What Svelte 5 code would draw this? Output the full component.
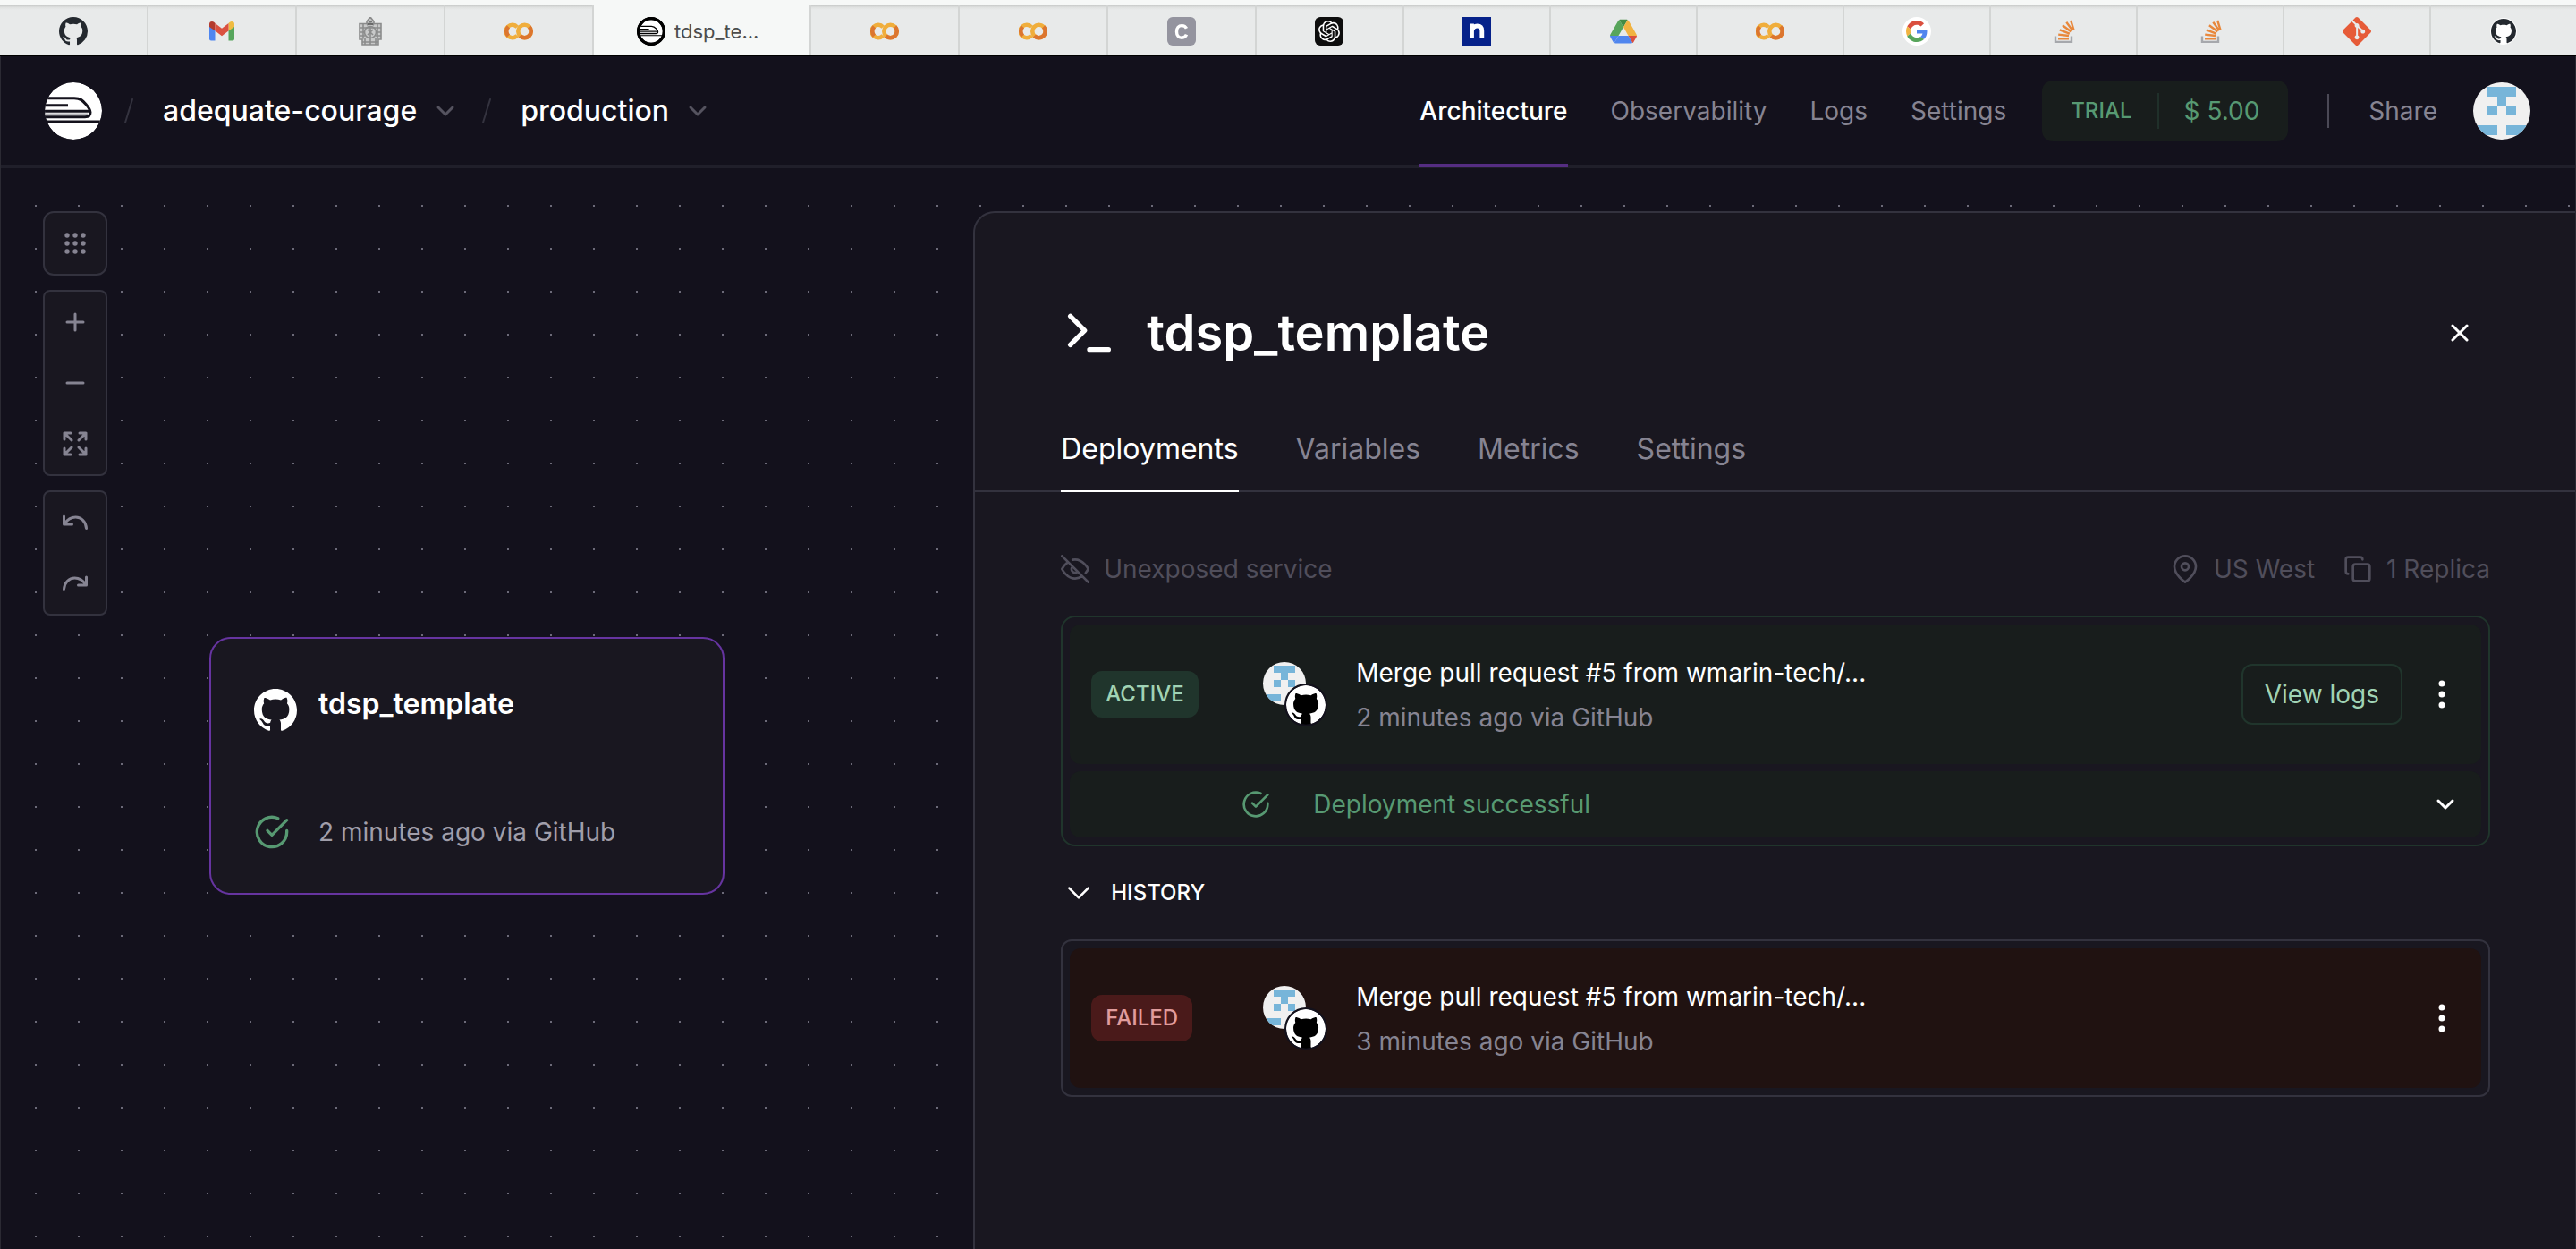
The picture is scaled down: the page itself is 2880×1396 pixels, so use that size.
<script lang="ts">
  type Deployment = { status: string; kind: string; title: string; time: string; logs: boolean };

  const tabsBefore = ['github', 'gmail', 'crest', 'colab'];
  const tabsAfter = [
    'colab', 'colab', 'letter', 'openai', 'notebook', 'drive',
    'colab', 'google', 'stack', 'stack', 'git', 'githubRound'
  ];
  const nav = ['Architecture', 'Observability', 'Logs', 'Settings'];
  const panelTabs = ['Deployments', 'Variables', 'Metrics', 'Settings'];

  const active: Deployment = {
    status: 'ACTIVE', kind: 'ok', title: 'Merge pull request #5 from wmarin-tech/...',
    time: '2 minutes ago via GitHub', logs: true
  };
  const failed: Deployment = {
    status: 'FAILED', kind: 'bad', title: 'Merge pull request #5 from wmarin-tech/...',
    time: '3 minutes ago via GitHub', logs: false
  };

  const octocat =
    'M8 0C3.58 0 0 3.58 0 8c0 3.54 2.29 6.53 5.47 7.59.4.07.55-.17.55-.38 0-.19-.01-.82-.01-1.49-2.01.37-2.53-.49-2.69-.94-.09-.23-.48-.94-.82-1.13-.28-.15-.68-.52-.01-.53.63-.01 1.08.58 1.23.82.72 1.21 1.87.87 2.33.66.07-.52.28-.87.51-1.07-1.78-.2-3.64-.89-3.64-3.95 0-.87.31-1.59.82-2.15-.08-.2-.36-1.02.08-2.12 0 0 .67-.21 2.2.82.64-.18 1.32-.27 2-.27s1.36.09 2 .27c1.53-1.04 2.2-.82 2.2-.82.44 1.1.16 1.92.08 2.12.51.56.82 1.27.82 2.15 0 3.07-1.87 3.75-3.65 3.95.29.25.54.73.54 1.48 0 1.07-.01 1.93-.01 2.2 0 .21.15.46.55.38A8.01 8.01 0 0 0 16 8c0-4.42-3.58-8-8-8z';
</script>

{#snippet favicon(name: string)}
  {#if name === 'github'}
    <svg class="favicon" viewBox="0 0 16 16"><path fill="#24292f" d={octocat} /></svg>
  {:else if name === 'githubRound'}
    <svg class="favicon" viewBox="0 0 32 32">
      <circle cx="16" cy="16" r="15" fill="#fff" />
      <g transform="translate(2 2) scale(1.75)"><path fill="#24292f" d={octocat} /></g>
    </svg>
  {:else if name === 'gmail'}
    <svg class="favicon" viewBox="0 0 32 32">
      <path fill="#4e86f0" d="M2 9v15.500q0 2 2 2h4.500V14z" />
      <path fill="#56a55c" d="M30 9v15.500q0 2-2 2h-4.500V14z" />
      <path fill="#b33b2e" d="M2 9.500V8q0-3 3-3 1.200 0 2.200.8L8.500 7v8.500L2 11z" />
      <path fill="#efbb41" d="M30 9.500V8q0-3-3-3-1.200 0-2.200.8L23.500 7v8.500L30 11z" />
      <path fill="#da5140" d="M8.500 7 16 12.800 23.500 7v8.500L16 21.200 8.500 15.500z" />
    </svg>
  {:else if name === 'crest'}
    <svg class="favicon" viewBox="0 0 32 32" fill="none" stroke="#8b8c8c" stroke-width="1.600">
      <path fill="#c3c4c4" d="M12 5 16 0l4 5v3h-8z" />
      <path fill="#c8c9c9" d="M4 7.500h24v17.500h-3v6H7v-6H4z" />
      <path d="M8 7.500v17M24 7.500v17M12 9l4-2 4 2M4 12h24M4 17h6M22 17h6M4 21h6M22 21h6" />
      <circle cx="16" cy="17" r="6.500" />
      <path d="M13 14l6 6M19 14l-6 6M16 11v13M10 24v7M16 24v7M22 24v7M7 28h18" />
      <path stroke="#5d5e5e" d="M14 5h4M13 8h6" />
    </svg>
  {:else if name === 'colab'}
    <svg class="favicon" viewBox="0 0 32 32" fill="none" stroke-width="4.600">
      <path stroke="#f0ae3c" d="M14.200 11.200A7.200 7.200 0 1 0 14.200 20.800" />
      <path stroke="#dc762f" d="M4.400 10.900A7.200 7.200 0 0 0 4.400 21.100" />
      <circle stroke="#f0ae3c" cx="22.500" cy="16" r="7.200" />
      <path stroke="#dc762f" d="M27.600 10.900A7.200 7.200 0 0 1 17.400 21.100" />
    </svg>
  {:else if name === 'letter'}
    <svg class="favicon" viewBox="0 0 32 32">
      <rect width="32" height="32" rx="6" fill="#94949f" />
      <path d="M21.500 12.800C20.500 10.500 18.600 9.600 16.200 9.600c-3.400 0-5.700 2.600-5.700 6.800s2.300 6.800 5.700 6.800c2.400 0 4.400-1 5.300-3.500" fill="none" stroke="#fff" stroke-width="3.400" />
    </svg>
  {:else if name === 'openai'}
    <svg class="favicon" viewBox="0 0 32 32">
      <rect width="32" height="32" rx="6" fill="#0d0d0d" />
      <path
        transform="translate(4 4)"
        fill="#fff"
        d="M22.2819 9.8211a5.9847 5.9847 0 0 0-.5157-4.9108 6.0462 6.0462 0 0 0-6.5098-2.9A6.0651 6.0651 0 0 0 4.9807 4.1818a5.9847 5.9847 0 0 0-3.9977 2.9 6.0462 6.0462 0 0 0 .7427 7.0966 5.98 5.98 0 0 0 .511 4.9107 6.051 6.051 0 0 0 6.5146 2.9001A5.9847 5.9847 0 0 0 13.2599 24a6.0557 6.0557 0 0 0 5.7718-4.2058 5.9894 5.9894 0 0 0 3.9977-2.9001 6.0557 6.0557 0 0 0-.7475-7.0729zm-9.022 12.6081a4.4755 4.4755 0 0 1-2.8764-1.0408l.1419-.0804 4.7783-2.7582a.7948.7948 0 0 0 .3927-.6813v-6.7369l2.02 1.1686a.071.071 0 0 1 .038.052v5.5826a4.504 4.504 0 0 1-4.4945 4.4944zm-9.6607-4.1254a4.4708 4.4708 0 0 1-.5346-3.0137l.142.0852 4.783 2.7582a.7712.7712 0 0 0 .7806 0l5.8428-3.3685v2.3324a.0804.0804 0 0 1-.0332.0615L9.74 19.9502a4.4992 4.4992 0 0 1-6.1408-1.6464zM2.3408 7.8956a4.485 4.485 0 0 1 2.3655-1.9728V11.6a.7664.7664 0 0 0 .3879.6765l5.8144 3.3543-2.0201 1.1685a.0757.0757 0 0 1-.071 0l-4.8303-2.7865A4.504 4.504 0 0 1 2.3408 7.872zm16.5963 3.8558L13.1038 8.364 15.1192 7.2a.0757.0757 0 0 1 .071 0l4.8303 2.7913a4.4944 4.4944 0 0 1-.6765 8.1042v-5.6772a.79.79 0 0 0-.407-.667zm2.0107-3.0231l-.142-.0852-4.7735-2.7818a.7759.7759 0 0 0-.7854 0L9.409 9.2297V6.8974a.0662.0662 0 0 1 .0284-.0615l4.8303-2.7866a4.4992 4.4992 0 0 1 6.6802 4.66zM8.3065 12.863l-2.02-1.1638a.0804.0804 0 0 1-.038-.0567V6.0742a4.4992 4.4992 0 0 1 7.3757-3.4537l-.142.0805L8.704 5.459a.7948.7948 0 0 0-.3927.6813zm1.0976-2.3654l2.602-1.4998 2.6069 1.4998v2.9994l-2.5974 1.4997-2.6067-1.4997Z"
      />
    </svg>
  {:else if name === 'notebook'}
    <svg class="favicon" viewBox="0 0 32 32">
      <rect width="32" height="32" fill="#06228a" />
      <path d="M8 10h2.500V24M10.500 15c1-3 3.500-5 6-5 3.600 0 5.300 2 5.300 5.500V24" fill="none" stroke="#fff" stroke-width="4.800" />
    </svg>
  {:else if name === 'drive'}
    <svg class="favicon" viewBox="-3 -8 93.300 93.300">
      <path fill="#4d83ee" d="m6.600 66.850 3.850 6.650c.8 1.400 1.950 2.500 3.300 3.300l13.750-23.800h-27.500c0 1.550.4 3.100 1.200 4.500z" />
      <path fill="#57a55b" d="m43.650 25-13.750-23.800c-1.350.8-2.500 1.900-3.300 3.300l-25.400 44a9.060 9.060 0 0 0 -1.200 4.500h27.500z" />
      <path fill="#da4f3e" d="m73.550 76.800c1.350-.8 2.500-1.900 3.300-3.300l1.600-2.750 7.650-13.250c.8-1.400 1.200-2.950 1.200-4.500h-27.502l5.852 11.500z" />
      <path fill="#438c45" d="m43.650 25 13.750-23.800c-1.350-.8-2.900-1.200-4.500-1.200h-18.500c-1.600 0-3.150.45-4.500 1.200z" />
      <path fill="#5086ee" d="m59.800 53h-32.300l-13.750 23.800c1.350.8 2.900 1.200 4.500 1.200h50.800c1.600 0 3.150-.45 4.500-1.200z" />
      <path fill="#f1b341" d="m73.400 26.500-12.700-22c-.8-1.400-1.950-2.500-3.300-3.300l-13.750 23.800 16.150 28h27.450c0-1.550-.4-3.100-1.200-4.500z" />
    </svg>
  {:else if name === 'google'}
    <svg class="favicon" viewBox="0 0 32 32">
      <circle cx="16" cy="16" r="16" fill="#fff" />
      <g transform="translate(4 4) scale(.5)">
        <path fill="#da4f3e" d="M24 9.500c3.540 0 6.710 1.220 9.210 3.600l6.850-6.850C35.900 2.380 30.470 0 24 0 14.620 0 6.510 5.380 2.560 13.220l7.980 6.190C12.430 13.720 17.740 9.500 24 9.500z" />
        <path fill="#5086ee" d="M46.980 24.550c0-1.570-.15-3.090-.38-4.550H24v9.020h12.940c-.58 2.960-2.260 5.480-4.780 7.180l7.730 6c4.510-4.180 7.090-10.360 7.090-17.650z" />
        <path fill="#f1b341" d="M10.530 28.590c-.48-1.450-.76-2.990-.76-4.590s.27-3.140.76-4.590l-7.980-6.190C.92 16.460 0 20.120 0 24c0 3.880.92 7.540 2.560 10.780l7.970-6.190z" />
        <path fill="#57a55b" d="M24 48c6.480 0 11.930-2.130 15.890-5.810l-7.730-6c-2.150 1.450-4.920 2.300-8.160 2.300-6.260 0-11.570-4.220-13.470-9.910l-7.980 6.190C6.510 42.620 14.620 48 24 48z" />
      </g>
    </svg>
  {:else if name === 'stack'}
    <svg class="favicon" viewBox="0 0 32 32" fill="none" stroke="#e8883c" stroke-width="2.400">
      <path stroke="#a6a8ac" d="M7 21.500v6.400h18v-6.400" />
      <path d="M10 24.200h12M10.200 19.600l11.800 1.400M11.800 14.400l11 4.200M14.900 9.300l9.500 7M19.300 5.800l6.900 9.300M24.200 3.800l3.300 10.700" />
    </svg>
  {:else if name === 'git'}
    <svg class="favicon" viewBox="0 0 24 24">
      <path
        fill="#e65b38"
        d="M23.546 10.930L13.067.452c-.604-.603-1.582-.603-2.188 0L8.708 2.627l2.760 2.760c.645-.215 1.379-.07 1.889.441.516.515.658 1.258.438 1.900l2.658 2.660c.645-.223 1.387-.078 1.900.435.721.72.721 1.884 0 2.604-.719.719-1.881.719-2.600 0-.539-.541-.674-1.337-.404-1.996L12.860 8.955v6.525c.176.086.342.203.488.348.713.721.713 1.883 0 2.600-.719.721-1.889.721-2.609 0-.719-.719-.719-1.879 0-2.598.182-.18.387-.316.605-.406V8.835c-.217-.091-.424-.222-.6-.401-.545-.545-.676-1.342-.396-2.009L7.636 3.700.450 10.881c-.6.605-.6 1.584 0 2.189l10.480 10.477c.604.604 1.582.604 2.186 0l10.430-10.430c.605-.603.605-1.582 0-2.187"
      />
    </svg>
  {/if}
{/snippet}

{#snippet train(line: string)}
  <circle cx="32" cy="32" r="32" fill="#fff" />
  <g fill="none" stroke={line} stroke-width="3">
    <path d="M3 17.700H33C40 17.700 42.500 20.500 46 24.500 49 28 51 30.500 51 33.500 51 37 48.500 38.700 45 38.700H0M0 25.800H26M0 32.300H50.500M2 43.900H62" />
  </g>
  <path d="M0 35.600H48" stroke="#b9b9bd" stroke-width="2" />
{/snippet}

{#snippet identicon()}
  <svg class="identicon" viewBox="0 0 12 12" shape-rendering="crispEdges" aria-hidden="true">
    <rect width="12" height="12" fill="#f0f0f0" />
    <path fill="#77b5d9" d="M3 1h6v2H3zM5 3h2v2H5zM3 5h2v2H3zM7 5h2v2H7zM1 9h4v2H1zM7 9h4v2H7z" />
  </svg>
{/snippet}

{#snippet chevron(cls: string)}
  <svg class={cls} viewBox="0 0 24 24" fill="none" stroke="currentColor" stroke-linecap="round" stroke-linejoin="round" aria-hidden="true">
    <path d="M4 8l8 8 8-8" />
  </svg>
{/snippet}

{#snippet checkCircle(cls: string)}
  <svg class={cls} viewBox="0 0 24 24" fill="none" stroke="currentColor" stroke-width="2" stroke-linecap="round" stroke-linejoin="round" aria-hidden="true">
    <path d="M22 11.080V12a10 10 0 1 1-5.930-9.140M22 4 12 14.010l-3-3" />
  </svg>
{/snippet}

{#snippet deploymentRow(d: Deployment)}
  <div class="row {d.kind}">
    <div class="status"><span class="badge">{d.status}</span></div>
    <div class="who">
      {@render identicon()}
      <svg class="source" viewBox="0 0 16 16" role="img" aria-label="GitHub">
        <circle cx="8" cy="8" r="7.900" fill="#000" />
        <path fill="#fff" d={octocat} />
      </svg>
    </div>
    <div class="commit">
      <p class="commit-title">{d.title}</p>
      <p class="commit-time">{d.time}</p>
    </div>
    {#if d.logs}<button class="logs">View logs</button>{/if}
    <button class="kebab" aria-label="Deployment menu">
      <svg viewBox="0 0 32 32" fill="currentColor"><circle cx="16" cy="4" r="3.500" /><circle cx="16" cy="16" r="3.500" /><circle cx="16" cy="28" r="3.500" /></svg>
    </button>
  </div>
{/snippet}

<div class="page">
  <div class="tabbar">
    {#each tabsBefore as name}
      <button class="tab" aria-label={name}>{@render favicon(name)}</button>
    {/each}
    <button class="tab current">
      <svg class="favicon" viewBox="0 0 80 80">
        <circle cx="40" cy="40" r="40" fill="#000" />
        <g transform="translate(8 8)">{@render train('#000')}</g>
        <circle cx="40" cy="40" r="36" fill="none" stroke="#000" stroke-width="8" />
      </svg>
      <span>tdsp_te...</span>
    </button>
    {#each tabsAfter as name}
      <button class="tab after" aria-label={name}>{@render favicon(name)}</button>
    {/each}
  </div>

  <div class="frame">
    <header>
      <a class="logo" href="#home" aria-label="Home">
        <svg viewBox="0 0 64 64">
          <clipPath id="disc"><circle cx="32" cy="32" r="32" /></clipPath>
          <g clip-path="url(#disc)">{@render train('#14121c')}</g>
        </svg>
      </a>
      <svg class="slash" viewBox="0 0 12 28" aria-hidden="true"><path d="M10 1 2 27" /></svg>
      <button class="crumb">adequate-courage {@render chevron('crumb-chevron')}</button>
      <svg class="slash" viewBox="0 0 12 28" aria-hidden="true"><path d="M10 1 2 27" /></svg>
      <button class="crumb">production {@render chevron('crumb-chevron')}</button>

      <nav>
        {#each nav as item, i}
          <a href="#{item.toLowerCase()}" class:selected={i === 0}>{item}</a>
        {/each}
      </nav>
      <div class="trial"><span class="plan">TRIAL</span><span class="credit">$ 5.00</span></div>
      <span class="separator"></span>
      <button class="share">Share</button>
      <button class="account" aria-label="Account">{@render identicon()}</button>
    </header>

    <main>
      <section class="workspace">
        <div class="tools">
          <div class="toolgroup single">
            <button aria-label="Grid">
              <svg viewBox="0 0 24 24" fill="currentColor">
                {#each [3, 12, 21] as y}{#each [3, 12, 21] as x}<circle cx={x} cy={y} r="2.700" />{/each}{/each}
              </svg>
            </button>
          </div>
          <div class="toolgroup">
            <button aria-label="Zoom in"><svg viewBox="0 0 24 24"><path d="M12 3v18M3 12h18" /></svg></button>
            <button aria-label="Zoom out"><svg viewBox="0 0 24 24"><path d="M3 12h18" /></svg></button>
            <button aria-label="Fit view">
              <svg class="wide" viewBox="0 0 28 28"><path d="M2 9V2H9M2 2 10 10M19 2h7V9M26 2 18 10M2 19v7H9M2 26 10 18M26 19v7H19M26 26 18 18" /></svg>
            </button>
          </div>
          <div class="toolgroup">
            <button aria-label="Undo"><svg class="wide" viewBox="0 0 28 28"><path d="M1.500 7v9H10.500M2 15.500C5 11 9 8 14.500 8 21 8 26 13 26.500 20.500" /></svg></button>
            <button aria-label="Redo"><svg class="wide" viewBox="0 0 28 28"><path d="M26.500 7v9H17.500M26 15.500C23 11 19 8 13.500 8 7 8 2 13 1.500 20.500" /></svg></button>
          </div>
        </div>

        <article class="node">
          <div class="node-head">
            <svg class="node-logo" viewBox="0 0 16 16" aria-hidden="true"><path fill="#fff" d={octocat} /></svg>
            <h2>tdsp_template</h2>
          </div>
          <div class="node-foot">{@render checkCircle('node-check')}<span>2 minutes ago via GitHub</span></div>
        </article>
      </section>

      <aside>
        <div class="panel-head">
          <svg class="terminal" viewBox="0 0 24 24" aria-hidden="true"><path d="M4 17l6-6-6-6M12 19h8" /></svg>
          <h1>tdsp_template</h1>
          <button class="close" aria-label="Close"><svg viewBox="0 0 20 20"><path d="M2 2l16 16M18 2 2 18" /></svg></button>
        </div>
        <div class="panel-tabs" role="tablist">
          {#each panelTabs as item, i}
            <button role="tab" aria-selected={i === 0} class:selected={i === 0}>{item}</button>
          {/each}
        </div>

        <div class="panel-body">
          <div class="meta">
            <svg viewBox="0 0 24 24" aria-hidden="true"><path d="M17.940 17.940A10.070 10.070 0 0 1 12 20c-7 0-11-8-11-8a18.450 18.450 0 0 1 5.060-5.940M9.900 4.240A9.120 9.120 0 0 1 12 4c7 0 11 8 11 8a18.500 18.500 0 0 1-2.160 3.190m-6.720-1.070a3 3 0 1 1-4.240-4.240M1 1l22 22" /></svg>
            <span>Unexposed service</span>
            <svg class="push" viewBox="0 0 24 24" aria-hidden="true"><path d="M21 10c0 7-9 13-9 13s-9-6-9-13a9 9 0 0 1 18 0z" /><circle cx="12" cy="10" r="3" /></svg>
            <span class="region">US West</span>
            <svg viewBox="0 0 24 24" aria-hidden="true"><rect x="8" y="8" width="14" height="14" rx="2" /><path d="M4 16c-1.100 0-2-.9-2-2V4c0-1.100.9-2 2-2h10c1.100 0 2 .9 2 2" /></svg>
            <span>1 Replica</span>
          </div>

          <div class="card ok">
            {@render deploymentRow(active)}
            <button class="outcome">
              {@render checkCircle('outcome-check')}
              <span>Deployment successful</span>
              {@render chevron('outcome-chevron')}
            </button>
          </div>

          <button class="history">{@render chevron('history-chevron')}HISTORY</button>

          <div class="card">{@render deploymentRow(failed)}</div>
        </div>
      </aside>
    </main>
  </div>
</div>

<style>
  :global(body) {
    margin: 0;
    background: #13111c;
  }
  .page {
    min-height: 100vh;
    display: flex;
    flex-direction: column;
    font-family: Inter, 'Liberation Sans', sans-serif;
    font-size: 28px;
    line-height: 40px;
    color: #fff;
    box-sizing: border-box;
  }
  .page :global(*) {
    box-sizing: border-box;
  }
  button {
    font: inherit;
    color: inherit;
    background: none;
    border: 0;
    padding: 0;
    margin: 0;
  }
  a {
    color: inherit;
    text-decoration: none;
  }
  svg {
    display: block;
    flex: none;
  }
  h1, h2, p {
    margin: 0;
  }

  .tabbar {
    display: grid;
    grid-template-columns: repeat(4, 166fr) 241fr repeat(4, 166fr) repeat(8, 164fr);
    height: 63px;
    padding-top: 6px;
    background: #f6f8f7;
    border-bottom: 1px solid #000;
  }
  .tab {
    display: flex;
    align-items: center;
    justify-content: center;
    gap: 10px;
    min-width: 0;
    padding-top: 2px;
    border-right: 2px solid #d3d5d4;
    background: linear-gradient(#c6c8c7, #dfe1e0 2px, #e8eaea 5px);
  }
  .tab.after {
    border-left: 2px solid #d3d5d4;
    border-right: 0;
  }
  .tab.current {
    padding-right: 8px;
    border-right: 0;
    background: #f6f8f7;
    color: #4c4d4d;
    font-size: 22px;
    line-height: 28px;
  }
  .favicon {
    width: 32px;
    height: 32px;
  }

  .frame {
    flex: 1;
    display: flex;
    flex-direction: column;
    border: solid #2b2a33;
    border-width: 0 1px;
  }
  header {
    display: flex;
    align-items: center;
    height: 125px;
    padding: 1px 50px 0 49px;
    border-bottom: 4px solid #201f2a;
  }
  .logo svg {
    width: 64px;
    height: 64px;
  }
  .slash {
    width: 12px;
    height: 28px;
    margin: 0 32px 0 24px;
    fill: none;
    stroke: #34333f;
    stroke-width: 2;
    stroke-linecap: round;
  }
  .crumb {
    display: flex;
    align-items: center;
    gap: 20px;
    font-size: 32px;
    font-weight: 500;
  }
  .crumb + .slash {
    margin-left: 28px;
  }
  .crumb-chevron {
    width: 24px;
    height: 24px;
    color: #55535f;
    stroke-width: 3;
  }
  nav {
    display: flex;
    align-self: stretch;
    gap: 48px;
    margin-left: auto;
    color: #868492;
  }
  nav a {
    display: flex;
    align-items: center;
  }
  nav a.selected {
    color: #fff;
    font-weight: 500;
    border-bottom: 4px solid #552d82;
    margin-bottom: -3px;
  }
  .trial {
    display: flex;
    align-items: center;
    height: 68px;
    margin-left: 40px;
    padding: 0 32px;
    border-radius: 12px;
    background: #181d1c;
    color: #579972;
  }
  .plan {
    font-size: 24px;
    font-weight: 500;
    padding-right: 28px;
    border-right: 2px solid #20302a;
  }
  .credit {
    padding-left: 28px;
  }
  .separator {
    width: 2px;
    height: 38px;
    margin: 0 44px;
    background: #4b4956;
  }
  .share {
    color: #868492;
  }
  .account {
    margin-left: 40px;
  }
  .identicon {
    border-radius: 50%;
    width: 48px;
    height: 48px;
  }
  .account .identicon {
    width: 64px;
    height: 64px;
  }

  main {
    flex: 1;
    display: grid;
    grid-template-columns: 1088fr 1792fr;
    padding-top: 48px;
    background: radial-gradient(circle at 1px 1px, #6c6a78 1px, transparent 1px) 38px 41px / 48px 48px;
  }
  .workspace {
    position: relative;
    padding-left: 47px;
  }
  .tools {
    display: flex;
    flex-direction: column;
    gap: 16px;
    width: 72px;
  }
  .toolgroup {
    display: flex;
    flex-direction: column;
    border: 2px solid #33323e;
    border-radius: 8px;
    background: #191720;
    color: #868492;
  }
  .single {
    border-radius: 12px;
  }
  .toolgroup button {
    display: flex;
    align-items: center;
    justify-content: center;
    height: 68px;
  }
  .toolgroup svg {
    width: 24px;
    height: 24px;
    stroke: currentColor;
    stroke-width: 3;
    stroke-linecap: round;
    stroke-linejoin: round;
    fill: none;
  }
  .toolgroup .wide {
    width: 28px;
    height: 28px;
  }
  .single svg {
    stroke: none;
    fill: currentColor;
  }

  .node {
    position: absolute;
    left: 233px;
    top: 476px;
    width: 576px;
    height: 288px;
    padding: 48px;
    display: flex;
    flex-direction: column;
    justify-content: space-between;
    border: 2px solid #6634a0;
    border-radius: 24px;
    background: #191720;
  }
  .node-head {
    display: flex;
    align-items: flex-start;
    gap: 24px;
  }
  .node-logo {
    width: 48px;
    height: 48px;
    margin-top: 8px;
  }
  h2 {
    font-size: 32px;
    line-height: 50px;
    font-weight: 600;
  }
  .node-foot {
    display: flex;
    align-items: center;
    gap: 32px;
    color: #a09eaa;
  }
  .node-check {
    width: 40px;
    height: 40px;
    color: #579972;
  }

  aside {
    border: 2px solid #33323e;
    border-width: 2px 0 0 2px;
    border-top-left-radius: 24px;
    background: #191720;
  }
  .panel-head {
    display: flex;
    align-items: center;
    padding: 102px 119px 0 96px;
  }
  .terminal {
    width: 64px;
    height: 64px;
    fill: none;
    stroke: #fff;
    stroke-width: 2;
    stroke-linecap: round;
    stroke-linejoin: round;
  }
  h1 {
    margin-left: 32px;
    font-size: 56px;
    line-height: 64px;
    font-weight: 600;
  }
  .close {
    margin-left: auto;
  }
  .close svg {
    width: 20px;
    height: 20px;
    fill: none;
    stroke: #fff;
    stroke-width: 3;
    stroke-linecap: round;
  }
  .panel-tabs {
    display: flex;
    gap: 64px;
    margin-top: 78px;
    padding: 0 96px;
    border-bottom: 2px solid #33323e;
    font-size: 32px;
    color: #868492;
  }
  .panel-tabs button {
    padding-bottom: 26px;
    margin-bottom: -2px;
    border-bottom: 2px solid transparent;
  }
  .panel-tabs .selected {
    color: #fff;
    border-bottom-color: #fff;
  }
  .panel-body {
    display: flex;
    flex-direction: column;
    gap: 32px;
    padding: 66px 95px 96px 96px;
  }
  .meta {
    display: flex;
    align-items: center;
    gap: 16px;
    color: #504e5b;
  }
  .meta svg {
    width: 32px;
    height: 32px;
    fill: none;
    stroke: currentColor;
    stroke-width: 2;
    stroke-linecap: round;
    stroke-linejoin: round;
  }
  .meta .push {
    margin-left: auto;
  }
  .region {
    margin-right: 16px;
  }

  .card {
    display: flex;
    flex-direction: column;
    gap: 8px;
    padding: 8px;
    border: 2px solid #33323e;
    border-radius: 12px;
  }
  .card.ok {
    border-color: #20352c;
    border-radius: 16px;
  }
  .row {
    display: flex;
    align-items: center;
    height: 156px;
    padding: 0 28px 0 24px;
    border-radius: 12px;
  }
  .row.ok,
  .outcome {
    background: #181d1c;
  }
  .row.bad {
    background: #201211;
  }
  .status {
    width: 192px;
  }
  .badge {
    display: inline-block;
    padding: 6px 16px;
    border-radius: 12px;
    font-size: 24px;
    font-weight: 500;
  }
  .ok .badge {
    background: #20352c;
    color: #a0d3b5;
  }
  .bad .badge {
    background: #4a1a1a;
    color: #e09c9c;
  }
  .who {
    position: relative;
    width: 72px;
    height: 72px;
  }
  .source {
    position: absolute;
    right: 0;
    bottom: 0;
    width: 48px;
    height: 48px;
    border: 2px solid #13111c;
    border-radius: 50%;
    background: #13111c;
  }
  .commit {
    flex: 1;
    min-width: 0;
    margin-left: 32px;
    padding-top: 2px;
  }
  .commit-title {
    line-height: 50px;
  }
  .commit-time {
    line-height: 50px;
    color: #868492;
  }
  .logs {
    height: 68px;
    padding: 0 24px;
    border: 2px solid #20352c;
    border-radius: 12px;
    color: #a0d3b5;
  }
  .kebab {
    margin-left: 28px;
  }
  .kebab svg {
    width: 32px;
    height: 32px;
  }
  .outcome {
    display: flex;
    align-items: center;
    height: 74px;
    padding: 0 28px 0 192px;
    border-radius: 12px;
    color: #579972;
  }
  .outcome-check {
    width: 32px;
    height: 32px;
  }
  .outcome span {
    margin-left: 48px;
  }
  .outcome-chevron {
    width: 24px;
    height: 24px;
    margin-left: auto;
    color: #fff;
    stroke-width: 3;
  }
  .history {
    display: flex;
    align-items: center;
    align-self: flex-start;
    gap: 20px;
    padding-left: 4px;
    font-size: 24px;
    font-weight: 500;
  }
  .history-chevron {
    width: 32px;
    height: 32px;
    stroke-width: 2;
  }
</style>
